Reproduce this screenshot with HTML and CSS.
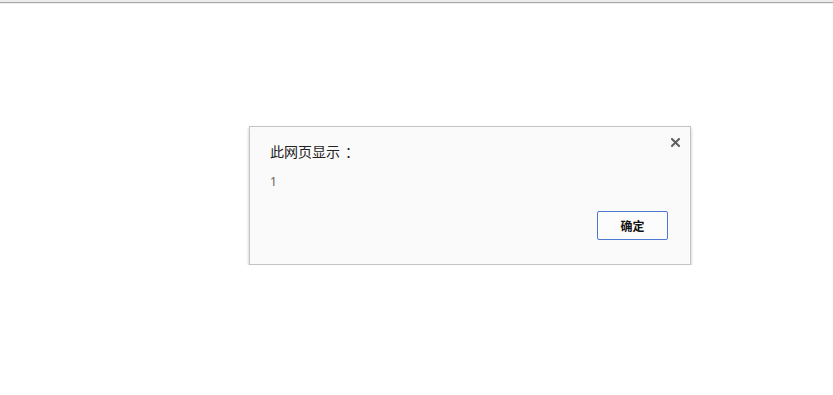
FILE: index.html
```html
<!DOCTYPE html>
<html lang="zh">
<head>
<meta charset="utf-8">
<link rel="stylesheet" href="styles.css">
</head>
<body>
<div class="topbar"></div>
<div class="page">
  <div class="dialog">
    <button class="close" aria-label="关闭">
      <svg width="9" height="9" viewBox="0 0 9 9"><path d="M1 1 L8 8 M8 1 L1 8" stroke="#5f5f5f" stroke-width="2" stroke-linecap="square"/></svg>
    </button>
    <div class="title">此网页显示<span class="colon">：</span></div>
    <div class="message">1</div>
    <div class="actions">
      <button class="ok">确定</button>
    </div>
  </div>
</div>
</body>
</html>
```
FILE: styles.css
```css
html, body {
  margin: 0;
  padding: 0;
  background: #ffffff;
  font-family: "Noto Sans", "Noto Sans CJK SC", sans-serif;
}
.topbar {
  height: 2px;
  background: #ececec;
  border-bottom: 1px solid #a6a6a6;
  box-shadow: 0 1px 0 #f1f1f1;
}
.page {
  padding-top: 123px;
  padding-left: 249px;
}
.dialog {
  position: relative;
  box-sizing: border-box;
  width: 442px;
  height: 139px;
  background: #fafafa;
  border: 1px solid #c4c4c4;
  box-shadow: 0 2px 3px rgba(0,0,0,0.25);
  padding: 14px 20px 0 20px;
}
.close {
  position: absolute;
  top: 10px;
  right: 9px;
  width: 11px;
  height: 11px;
  padding: 0;
  border: 0;
  background: transparent;
  display: flex;
  align-items: center;
  justify-content: center;
}
.title {
  font-family: "Noto Sans CJK SC", sans-serif;
  font-size: 14px;
  line-height: 20px;
  color: #222222;
}
.colon {
  margin-left: 5px;
}
.message {
  margin-top: 12px;
  font-family: "Noto Sans", sans-serif;
  font-size: 12px;
  line-height: 18px;
  color: #66665a;
}
.actions {
  display: flex;
  justify-content: flex-end;
  margin-top: 20px;
  padding-right: 2px;
}
.ok {
  box-sizing: border-box;
  width: 71px;
  height: 29px;
  background: #fcfcfc;
  border: 1px solid #4d78d0;
  border-radius: 2px;
  font-family: "Noto Sans CJK SC", sans-serif;
  font-weight: bold;
  font-size: 12px;
  color: #111111;
  padding: 0;
}
```
